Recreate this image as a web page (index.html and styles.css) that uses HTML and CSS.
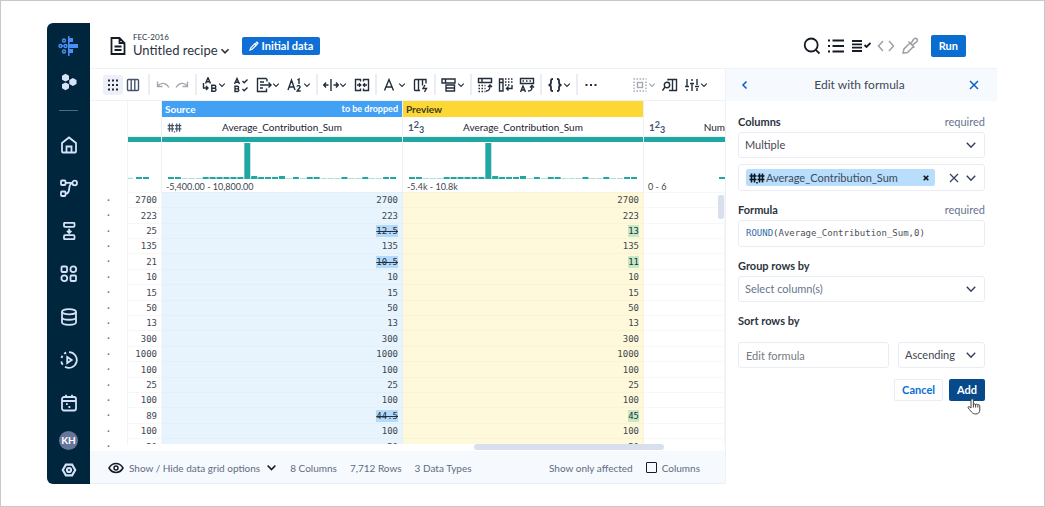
FILE: index.html
```html
<!DOCTYPE html>
<html lang="en">
<head>
<meta charset="utf-8">
<title>Untitled recipe</title>
<link rel="stylesheet" href="styles.css">
</head>
<body>
<svg class="defs" aria-hidden="true">
  <symbol id="chev" viewBox="0 0 10 10"><path d="M1.5 3.2 5 6.8 8.500 3.200"/></symbol>
  <symbol id="hash" viewBox="0 0 16 12"><path d="M2.500 1.500v9M5.500 1.500v9M.5 4h7M.5 7.500h7M10.500 1.500v9M13.500 1.500v9M8.500 4h7M8.500 7.500h7M8 10v1.500"/></symbol>
  <symbol id="bins" viewBox="0 0 230 36" preserveAspectRatio="none">
    <path d="M0 35.500h230" stroke="#a9dfda" stroke-width="1" stroke-dasharray="6 1"/>
    <path d="M0 35h6m1 0h6M35 35h6m1 0h6m1 0h6m1 0h6m1 0h6m1 0h6M84 35h6m1 0h6m1 0h6m1 0h6M126 35h6M140 35h6m1 0h6M175 35h6M196 35h6M217 35h6m1 0h6" stroke="#1fa8a2" stroke-width="2"/>
    <path d="M77 0h6v36h-6zM84 33h6v3h-6zM112 33h6v3h-6z" fill="#1fa8a2" stroke="none"/>
  </symbol>
</svg>
<div class="app">
  <nav class="sidebar" aria-label="Main">
    <a class="logo" href="#" aria-label="Home page"><svg width="22" height="24" viewBox="0 0 22 24"><g fill="#4a8ff5"><path d="M10 2h1.500v20H10zM11 4h4v4h-4zM11 10h9v4h-9zM11 15h4v4h-4z"/></g><g fill="none" stroke="#4a8ff5"><circle cx="6" cy="6.500" r="1.500"/><circle cx="2.500" cy="12" r="1.500"/><circle cx="6" cy="17.500" r="1.500"/><path d="M4 12h1.500"/><circle cx="7.500" cy="12" r="1.500"/></g></svg></a>
    <a class="apps" href="#" aria-label="Apps"><svg width="18" height="18" viewBox="0 0 16 18"><path fill="#d5e2f7" d="M4.500.800 8 2.700v4L4.500 8.600 1 6.700v-4zM11.800 5l3.700 2v4l-3.700 2L8.300 11V7zM4.500 9.400 8 11.300v4l-3.500 1.900L1 15.300v-4z"/></svg></a>
    <div class="rule"></div>
    <a class="nav" href="#" aria-label="Home"><svg viewBox="0 0 18 18"><path d="M2 7 9 1.500 16 7v8.500a1 1 0 0 1-1 1H3a1 1 0 0 1-1-1z"/><path d="M6.500 16v-5.500h5V16"/></svg></a>
    <a class="nav" href="#" aria-label="Flows"><svg viewBox="0 0 18 18"><rect x="1" y="1.500" width="4.500" height="4.500" rx="1"/><rect x="1" y="12.500" width="4.500" height="4.500" rx="1"/><circle cx="14.700" cy="4" r="2.300"/><path d="M5.500 3.800h6.900M12.500 4C9 5 9.500 8 9 11s-2 3.700-3.500 3.700"/></svg></a>
    <a class="nav" href="#" aria-label="Plans"><svg viewBox="0 0 18 18"><rect x="4" y=".8" width="10.500" height="4" rx="1"/><rect x="4" y="13.200" width="10.500" height="4" rx="1"/><path d="M9.200 6.800v4M7 8.800l2.200 2.200 2.200-2.200"/></svg></a>
    <a class="nav" href="#" aria-label="Library"><svg viewBox="0 0 18 18"><rect x="1.500" y="1.500" width="5.500" height="5.500" rx="1"/><circle cx="13.300" cy="4.300" r="2.900"/><circle cx="4.300" cy="13.300" r="2.900"/><rect x="10.500" y="10.500" width="5.500" height="5.500" rx="1"/></svg></a>
    <a class="nav" href="#" aria-label="Data"><svg viewBox="0 0 18 18"><ellipse cx="9" cy="3.800" rx="7" ry="2.600"/><path d="M2 4v10.300c0 3.400 14 3.400 14 0V4M2 9.200c0 3.400 14 3.400 14 0"/></svg></a>
    <a class="nav" href="#" aria-label="Jobs"><svg viewBox="0 0 18 18"><path d="M9 1.200a7.800 7.800 0 1 1-4 14.500M1.300 10.500a8 8 0 0 0 1.500 3.300M1.500 7a8 8 0 0 1 1-2.300M4.200 2.900a8 8 0 0 1 2-1.200"/><path d="M7.200 6v6l4.500-3z"/></svg></a>
    <a class="nav" href="#" aria-label="Schedules"><svg viewBox="0 0 18 18"><rect x="2" y="3" width="14" height="13.500" rx="2"/><path d="M2 7h14M6 .8V4M12 .8V4M6 10.200h1.800M8.500 13h1.800"/></svg></a>
    <a class="user" href="#"><span class="avatar">KH</span></a>
    <a class="settings" href="#" aria-label="Settings"><svg viewBox="0 0 18 18"><path d="M5.500 3h7l3.500 6-3.500 6h-7L2 9z"/><circle cx="9" cy="9" r="2.300"/></svg></a>
  </nav>
  <div class="workspace">
    <header class="topbar">
      <svg class="doc" width="16" height="18" viewBox="0 0 16 18"><path d="M1.500 1h8L14.500 6v11h-13zM9.500 1v5h5M4.500 9.500h7M4.500 13h7"/></svg>
      <div class="names">
        <div class="project">FEC-2016</div>
        <button class="recipe">Untitled recipe <svg width="10" height="10"><use href="#chev"/></svg></button>
      </div>
      <button class="initial"><svg width="10" height="10" viewBox="0 0 10 10"><path d="M1 9 2 6.500 5.500 3 7 4.500 3.500 8zM5 2.500 7.500 5M6.500 3 7.500 1.300a1 1 0 0 1 1.300 1.300L7 4"/></svg>Initial data</button>
      <div class="actions">
        <button aria-label="Search"><svg width="18" height="18" viewBox="0 0 18 18"><circle cx="8.200" cy="8" r="6.500"/><path d="m12.800 12.800 3.700 3.700"/></svg></button>
        <button aria-label="Steps"><svg width="18" height="18" viewBox="0 0 18 18"><path d="M5.500 3.500H17M5.500 9H17M5.500 14.500H17M1 3.500h2M1 9h2M1 14.500h2"/></svg></button>
        <button aria-label="Check steps"><svg width="20" height="18" viewBox="0 0 20 18"><path d="M1 4h10M1 7.300h10M1 10.600h10M1 14h10M13.500 8l2 2 4-4"/></svg></button>
        <button class="dim" aria-label="Code"><svg width="18" height="18" viewBox="0 0 18 18"><path d="M6 4 1.500 9 6 14M12 4l4.500 5-4.500 5"/></svg></button>
        <button class="dim" aria-label="Sample"><svg width="18" height="18" viewBox="0 0 18 18"><path d="m2 16 1-4 6-6 3.500 3.500-6 6-3.500.5zM7.500 4.500l6 6M10 6.500l2.500-4c1-1.500 2.500-1.500 3.300-.6.900.9.900 2.200-.6 3.300l-3.700 3"/></svg></button>
        <button class="run">Run</button>
      </div>
    </header>
    <div class="main">
      <section class="data">
        <div class="toolbar" role="toolbar">
          <div class="group tiles">
            <button class="tile on" aria-label="Grid"><svg width="14" height="14" viewBox="0 0 14 14"><path d="M2 2.500h10M2 7h10M2 11.500h10" stroke-width="2" stroke-dasharray="2 2"/></svg></button>
            <button class="tile" aria-label="Columns"><svg width="14" height="14" viewBox="0 0 14 14" class="slate"><rect x="1.500" y="1.500" width="11" height="11" rx="1"/><path d="M5.200 1.500v11M8.800 1.500v11"/></svg></button>
          </div>
          <i class="sep"></i>
          <div class="group history">
            <button aria-label="Undo"><svg class="faint" width="16" height="16" viewBox="0 0 16 16"><path d="M2.500 4.500v5h5M2.800 9C6 5 11 5.500 14 10.500"/></svg></button>
            <button aria-label="Redo"><svg class="faint" width="16" height="16" viewBox="0 0 16 16"><path d="M13.500 4.500v5h-5M13.200 9C10 5 5 5.500 2 10.500"/></svg></button>
          </div>
          <i class="sep"></i>
          <div class="group">
            <button aria-label="Replace"><svg width="16" height="16" viewBox="0 0 16 16"><path d="M3.500 6.500 6 .8l2.500 5.700M4.500 4.800h3M1.500 6v5h4M4 9l2 2-2 2M9.800 8.200v6h2.700a1.500 1.500 0 0 0 0-3H9.800h2.500a1.500 1.500 0 0 0 0-3z"/></svg><svg width="8" height="8"><use href="#chev"/></svg></button>
            <button aria-label="Standardize"><svg width="16" height="16" viewBox="0 0 16 16"><path d="M1.500 7 4 1.500 6.500 7M2.500 5.300h3M2 9.300v5.200h2.500a1.300 1.300 0 0 0 0-2.600H2h2.300a1.300 1.300 0 0 0 0-2.600zM9.500 4l1.700 1.700L14.500 2.500M9.500 12l1.700 1.700 3.300-3.200"/></svg></button>
            <button aria-label="Extract"><svg width="16" height="16" viewBox="0 0 16 16"><path d="M11 4.500v-2l-1-1H1.500v13h9v-3M4 5h4M4 11h3M4 8h11M12.500 5.500 15 8l-2.500 2.500"/></svg><svg width="8" height="8"><use href="#chev"/></svg></button>
            <button aria-label="Number format"><svg width="16" height="16" viewBox="0 0 16 16"><path d="M1 13 4.500 3 8 13M2 10h5M10.500 3l1.500-1v5M10 9.500c.5-1.500 3.500-1 3 .7L10.200 14h3.500"/></svg><svg width="8" height="8"><use href="#chev"/></svg></button>
          </div>
          <i class="sep"></i>
          <div class="group">
            <button aria-label="Split"><svg width="16" height="16" viewBox="0 0 16 16"><path d="M8 2v12M5.500 8h-5M3 5.500.8 8 3 10.500M10.500 8h5M13 5.500 15.200 8 13 10.500"/></svg><svg width="8" height="8"><use href="#chev"/></svg></button>
            <button aria-label="Merge"><svg width="16" height="16" viewBox="0 0 16 16"><path d="M6.500 4.500v-2h-5v11h5v-2M9.500 4.500v-2h5v11h-5v-2M3 8h3.500M5 6.300 6.700 8 5 9.700M13 8H9.500M11 6.300 9.300 8l1.700 1.700"/></svg></button>
          </div>
          <i class="sep"></i>
          <div class="group">
            <button aria-label="Text format"><svg width="16" height="16" viewBox="0 0 16 16"><path d="M2.500 13.500 7 2.500l4.500 11M4 10h6"/></svg><svg width="8" height="8"><use href="#chev"/></svg></button>
            <button aria-label="Column functions"><svg width="16" height="16" viewBox="0 0 16 16"><path d="M7 13.500H2.500a1 1 0 0 1-1-1v-9a1 1 0 0 1 1-1H13v4M5.500 2.500v11M9.500 2.500v6M12 8l-2 3.500h3.500L11.500 15"/></svg></button>
          </div>
          <i class="sep"></i>
          <div class="group">
            <button aria-label="Rows"><svg width="16" height="16" viewBox="0 0 16 16"><path d="M1 2h13v4H1zM4.500 2v4M5 8h8.500v6H5zM5 11h8.500"/></svg><svg width="8" height="8"><use href="#chev"/></svg></button>
          </div>
          <i class="sep"></i>
          <div class="group pivots">
            <button aria-label="Pivot"><svg width="16" height="16" viewBox="0 0 16 16"><path d="M1.500 1.500h13v4h-13zM5 1.500v4M9 14c3.500 0 4-2 4-5.500M11 10l2-2 2 2"/><path d="M1.500 8.500h7M1.500 11.500h7M1.500 14.500h7" stroke-dasharray="1.500 1.500"/></svg></button>
            <button aria-label="Unpivot"><svg width="16" height="16" viewBox="0 0 16 16"><path d="M1.500 2v12h3.500V2zM1.500 5.500H5M14 8v3.500H8.500M10.500 9.500l-2 2 2 2"/><path d="M7 2h8M7 5h8M7 8h5" stroke-dasharray="1.500 1.500"/></svg></button>
            <button aria-label="Header"><svg width="16" height="16" viewBox="0 0 16 16"><path d="M1.500 1.500h13v5h-13zM1.500 15 4 9l2.500 6M2.500 13h3M9 14c3.500 0 4-1.500 4-5M11 10.500l2-2 2 2"/><path d="M3.500 4h9" stroke-dasharray="1.500 2"/></svg></button>
          </div>
          <i class="sep"></i>
          <div class="group">
            <button aria-label="Nested data"><svg width="16" height="16" viewBox="0 0 16 16"><path d="M6 2C3.500 2 4 3.500 4 5.500S3 8 1.500 8C3 8 4 8.500 4 10.500S3.500 14 6 14M10 2c2.500 0 2 1.500 2 3.500S13 8 14.500 8C13 8 12 8.500 12 10.500S12.500 14 10 14" stroke-width="1.800"/></svg><svg width="8" height="8"><use href="#chev"/></svg></button>
          </div>
          <i class="sep"></i>
          <button aria-label="More"><svg width="16" height="16" viewBox="0 0 16 16"><path d="M2.500 8h12" stroke-width="2" stroke-dasharray="2 2.500"/></svg></button>
          <div class="group view">
            <button aria-label="Selection"><svg class="faint" width="16" height="16" viewBox="0 0 16 16"><path d="M1.500 2h13M1.500 14h13M2 4.500v8M14 4.500v8" stroke-dasharray="1.500 1.500"/><rect x="5.500" y="5.500" width="5" height="5"/></svg><svg class="faint" width="8" height="8"><use href="#chev"/></svg></button>
            <button aria-label="Find column"><svg width="16" height="16" viewBox="0 0 16 16"><circle cx="5" cy="8" r="2.700"/><path d="m3 10-2.500 3.500M6 3.500v-1h8.500v11H7M10.500 2.500v11"/></svg></button>
            <button aria-label="Filters"><svg width="16" height="16" viewBox="0 0 16 16"><path d="M3 2v7M3 12v2M8 2v2M8 7v7M13 2v6M13 11v3M1 9.500h4M6 6.500h4M11 9.500h4"/></svg><svg width="8" height="8"><use href="#chev"/></svg></button>
          </div>
        </div>
        <div class="grid">
          <ul class="gutter" aria-hidden="true"><li>·</li><li>·</li><li>·</li><li>·</li><li>·</li><li>·</li><li>·</li><li>·</li><li>·</li><li>·</li><li>·</li><li>·</li><li>·</li><li>·</li><li>·</li><li>·</li><li>·</li></ul>
          <div class="clip">
          <table>
            <colgroup><col class="c-first"><col class="c-mid"><col class="c-mid"><col></colgroup>
            <thead><tr>
              <th><div class="band"></div><div class="title"></div><div class="quality"></div><div class="hist"><svg width="33" height="36"><path d="M0 35.500h5" stroke="#a9dfda"/><path d="M8 35h6m1 0h6" stroke="#1fa8a2" stroke-width="2"/></svg></div><div class="range"></div></th>
              <th><div class="band source"><span>Source</span><span class="note">to be dropped</span></div><div class="title"><svg class="type" width="15" height="11"><use href="#hash"/></svg><span>Average_Contribution_Sum</span></div><div class="quality"></div><div class="hist"><svg class="bins"><use href="#bins"/></svg></div><div class="range">-5,400.00 - 10,800.00</div></th>
              <th><div class="band preview"><span>Preview</span></div><div class="title"><b class="int">1<sup>2</sup><sub>3</sub></b><span>Average_Contribution_Sum</span></div><div class="quality"></div><div class="hist"><svg class="bins"><use href="#bins"/></svg></div><div class="range">-5.4k - 10.8k</div></th>
              <th><div class="band"></div><div class="title end"><b class="int">1<sup>2</sup><sub>3</sub></b><span>Num</span></div><div class="quality"></div><div class="hist right"><svg width="6" height="36"><path d="M0 35h6" stroke="#1fa8a2" stroke-width="2"/></svg></div><div class="range">0 - 6</div></th>
            </tr></thead>
            <tbody>
              <tr><td>2700</td><td>2700</td><td>2700</td><td></td></tr>
              <tr><td>223</td><td>223</td><td>223</td><td></td></tr>
              <tr><td>25</td><td><del>12.5</del></td><td><ins>13</ins></td><td></td></tr>
              <tr><td>135</td><td>135</td><td>135</td><td></td></tr>
              <tr><td>21</td><td><del>10.5</del></td><td><ins>11</ins></td><td></td></tr>
              <tr><td>10</td><td>10</td><td>10</td><td></td></tr>
              <tr><td>15</td><td>15</td><td>15</td><td></td></tr>
              <tr><td>50</td><td>50</td><td>50</td><td></td></tr>
              <tr><td>13</td><td>13</td><td>13</td><td></td></tr>
              <tr><td>300</td><td>300</td><td>300</td><td></td></tr>
              <tr><td>1000</td><td>1000</td><td>1000</td><td></td></tr>
              <tr><td>100</td><td>100</td><td>100</td><td></td></tr>
              <tr><td>25</td><td>25</td><td>25</td><td></td></tr>
              <tr><td>100</td><td>100</td><td>100</td><td></td></tr>
              <tr><td>89</td><td><del>44.5</del></td><td><ins>45</ins></td><td></td></tr>
              <tr><td>100</td><td>100</td><td>100</td><td></td></tr>
              <tr><td>50</td><td>50</td><td>50</td><td></td></tr>
            </tbody>
          </table>
          </div>
          <div class="thumb-v"></div>
          <div class="thumb-h"></div>
        </div>
        <footer class="status">
          <button class="options"><svg width="16" height="12" viewBox="0 0 16 12"><path d="M1 6c3.500-6 10.500-6 14 0-3.500 6-10.500 6-14 0z"/><circle cx="8" cy="6" r="2"/></svg>Show / Hide data grid options<svg class="down" width="11" height="11"><use href="#chev"/></svg></button>
          <span>8 Columns</span><span>7,712 Rows</span><span>3 Data Types</span>
          <span class="affected">Show only affected</span>
          <label><input type="checkbox">Columns</label>
        </footer>
      </section>
      <aside class="panel">
        <div class="panel-head">
          <button aria-label="Back"><svg width="10" height="10" viewBox="0 0 10 10"><path d="M6.500 1.500 3 5l3.500 3.500"/></svg></button>
          <h2>Edit with formula</h2>
          <button aria-label="Close"><svg width="10" height="10" viewBox="0 0 10 10"><path d="m1 1 8 8M9 1 1 9"/></svg></button>
        </div>
        <form class="form">
          <div class="label first"><label for="cols">Columns</label><span>required</span></div>
          <div class="select"><select id="cols"><option>Multiple</option></select><svg width="12" height="12"><use href="#chev"/></svg></div>
          <div class="multi">
            <span class="chip"><svg width="16" height="12"><use href="#hash"/></svg>Average_Contribution_Sum<button type="button" aria-label="Remove"><svg width="6" height="6" viewBox="0 0 6 6"><path d="m.7.700 4.600 4.600M5.300.700.700 5.300"/></svg></button></span>
            <button type="button" aria-label="Clear all"><svg width="10" height="10" viewBox="0 0 10 10"><path d="m1 1 8 8M9 1 1 9"/></svg></button>
            <button type="button" aria-label="Open list"><svg width="12" height="12"><use href="#chev"/></svg></button>
          </div>
          <div class="label"><span class="name" id="formula-label">Formula</span><span>required</span></div>
          <div class="formula" role="textbox" contenteditable="true" spellcheck="false" aria-labelledby="formula-label"><span>ROUND</span>(Average_Contribution_Sum,0)</div>
          <div class="label"><label for="group">Group rows by</label></div>
          <div class="select empty"><select id="group"><option>Select column(s)</option></select><svg width="12" height="12"><use href="#chev"/></svg></div>
          <div class="label sort-label"><label for="sort">Sort rows by</label></div>
          <div class="sort">
            <input id="sort" type="text" placeholder="Edit formula">
            <div class="select order"><select aria-label="Sort order"><option>Ascending</option></select><svg width="12" height="12"><use href="#chev"/></svg></div>
          </div>
          <div class="buttons">
            <button type="button" class="cancel">Cancel</button>
            <button type="button" class="add">Add</button>
            <svg class="cursor" width="14" height="17" viewBox="0 0 14 17"><path d="M4 10V2a1.200 1.200 0 0 1 2.400 0v5c0-1.500 2.200-1.500 2.200 0 0-1.200 2.200-1.200 2.200.300 0-1 2-.9 2 .6V12c0 2.500-1.500 4-4 4-3 0-4-1.500-7.500-6C.5 8.500 2 7.800 4 10zM6.400 7v2.500M8.600 7v2.500M10.800 7.500v2"/></svg>
          </div>
        </form>
      </aside>
    </div>
  </div>
</div>
</body>
</html>
```

FILE: styles.css
```css
* { box-sizing: border-box; }
body {
  margin: 0;
  height: 100vh;
  display: flex;
  padding: 22px 47px 22px 46px;
  border: 1px solid #c8c8c8;
  background: #fff;
  font: 11px/14px Lato, "Open Sans", sans-serif;
  color: #2b3440;
}
.defs { position: absolute; width: 0; height: 0; }
svg { display: block; flex: none; fill: none; stroke: currentColor; stroke-width: 1.4; }
button, input, select { font: inherit; color: inherit; }
button { display: flex; align-items: center; justify-content: center; padding: 0; border: 0; background: none; }
ul, h2 { margin: 0; padding: 0; list-style: none; }

.app { flex: 1; display: flex; min-width: 0; border-radius: 6px; overflow: hidden; }

.sidebar { width: 43px; flex: none; display: flex; flex-direction: column; background: #00263e; color: #d5e2f7; }
.sidebar a { display: flex; align-items: center; justify-content: center; color: inherit; text-decoration: none; }
.logo { height: 45px; }
.logo svg, .apps svg { stroke: none; }
.apps { height: 28px; }
.rule { width: 19px; margin: 14px auto 12px; border-top: 1px solid #4f6a80; }
.nav { height: 43px; }
.nav svg { width: 18px; height: 18px; stroke-width: 1.8; }
.user { height: 32px; }
.avatar { width: 19px; height: 19px; border-radius: 50%; background: #66759a; color: #fff; font-weight: 700; font-size: 10px; line-height: 19px; text-align: center; }
.settings { height: 28px; }
.settings svg { width: 16px; height: 16px; stroke-width: 2.4; }

.workspace { flex: 1; min-width: 0; display: flex; flex-direction: column; }
.topbar { height: 46px; display: flex; align-items: center; padding: 0 31px 0 20px; border-bottom: 1px solid #eef1f6; }
.doc { stroke-width: 1.8; color: #151c26; }
.names { margin: 0 12px 0 7px; }
.project { font-size: 8px; line-height: 10px; }
.recipe { gap: 2px; font-size: 13px; line-height: 17px; }
.recipe svg { stroke-width: 1.6; }
.initial { gap: 3px; height: 18px; padding: 0 7px; border-radius: 2px; background: #0f6fd6; color: #fff; font-weight: 700; }
.initial svg { stroke-width: 1.2; }
.actions { margin-left: auto; display: flex; align-items: center; gap: 6px; color: #151c26; }
.actions svg { stroke-width: 1.8; }
.actions .dim { color: #9aa0a6; }
.actions .dim svg { stroke-width: 1.5; }
.run { height: 22px; padding: 0 8px; margin-left: 6px; border-radius: 2px; background: #0a6ed1; color: #fff; font-weight: 700; }

.main { flex: 1; min-height: 0; display: flex; }
.data { flex: 1; min-width: 0; display: flex; flex-direction: column; }
.toolbar { height: 32px; flex: none; display: flex; align-items: center; gap: 5px; padding: 0 17px 0 13px; border-bottom: 1px solid #eef1f6; color: #222d3b; }
.group { display: flex; gap: 7px; }
.tiles { gap: 0; }
.history { gap: 3px; }
.pivots { gap: 5px; }
.view { gap: 6px; margin-left: auto; }
.tile { width: 20px; height: 20px; border-radius: 3px; }
.on { background: #edf0f8; }
.slate { color: #44546f; }
.faint { color: #a3a9b1; }
.sep { width: 2px; height: 21px; background: #eaeef4; }

.grid { flex: 1 1 0; min-height: 0; display: flex; position: relative; overflow: hidden; }
.gutter { width: 37px; flex: none; padding-top: 91px; text-align: center; color: #6b7280; }
.gutter li { height: 15px; line-height: 15px; }
.gutter li:nth-child(5n+2), .gutter li:nth-child(5n) { height: 16px; }
.clip { flex: 1; min-width: 0; margin-bottom: 7px; overflow: hidden; border-left: 1px solid #f1f3f6; }
table { width: 100%; table-layout: fixed; border-collapse: separate; border-spacing: 0; }
.c-first { width: 34px; }
.c-mid { width: 241px; }
th, td { padding: 0; }
th { font-weight: 400; text-align: left; border-right: 1px solid #eef1f4; }
th:last-child { border-right: 0; }
.band { height: 16px; display: flex; justify-content: space-between; padding: 0 4px 0 3px; font-size: 10px; line-height: 16px; font-weight: 700; }
.note { font-size: 9px; }
.source { background: #42a1f5; color: #fff; }
.preview { background: #fdd835; color: #3d3a20; }
.title { position: relative; height: 20px; display: flex; align-items: center; justify-content: center; border-bottom: 1px solid #eef1f4; font-size: 10px; color: #1c242f; overflow: hidden; }
.title.end { justify-content: flex-end; }
.type { position: absolute; left: 5px; top: 5px; color: #44546f; }
.int { position: absolute; left: 5px; top: 3px; color: #44546f; }
.int sup, .int sub { font-size: 9px; line-height: 0; }
.int sup { vertical-align: 3px; }
.int sub { vertical-align: -2px; }
.quality { height: 5px; background: #1fa8a2; }
.hist { height: 38px; padding: 1px 6px; }
th:first-child .hist { padding: 1px 0; }
.hist.right { padding-right: 0; display: flex; justify-content: flex-end; }
.bins { width: 100%; height: 36px; }
.range { height: 12px; padding-left: 4px; font-size: 9px; line-height: 14px; color: #3e4650; white-space: nowrap; }
td { height: 15px; padding-right: 4px; border-top: 1px solid #f5f7f8; border-right: 1px solid #f3f5f7; text-align: right; font: 9px/12px "DejaVu Sans Mono", monospace; color: #3f464f; }
tr:nth-child(5n+2) td, tr:nth-child(5n) td { height: 16px; }
td:nth-child(2) { background: #e7f4fe; border-color: #e2f0fa; }
td:nth-child(3) { background: #fff9db; border-color: #faf4d4; }
del, ins { display: inline-block; line-height: 12px; color: #24303c; }
del { background: #b3dafa; text-decoration: line-through; }
ins { background: #c5e8c5; text-decoration: none; }
.thumb-v { position: absolute; right: 1px; top: 94px; width: 6px; height: 24px; border-radius: 2px; background: #d8e0ee; }
.thumb-h { position: absolute; right: 61px; bottom: 1px; width: 30%; height: 6px; border-radius: 3px; background: #d8e0ee; }

.status { height: 33px; flex: none; display: flex; align-items: center; gap: 13px; padding: 1px 25px 0 18px; background: #f6faff; border-bottom: 1px solid #eaf0f7; font-size: 10px; color: #5f6c80; }
.options { gap: 5px; }
.options svg { color: #151c26; stroke-width: 1.5; }
.options .down { margin-left: 1px; }
.affected { margin-left: auto; }
.status label { display: flex; align-items: center; gap: 5px; }
.status input { appearance: none; width: 11px; height: 11px; margin: 0; border: 1px solid #151c26; border-radius: 1px; outline: 0; }

.panel { width: 272px; flex: none; border-left: 1px solid #eef1f6; }
.panel-head { height: 32px; display: flex; align-items: center; justify-content: space-between; padding: 0 18px 0 14px; background: #f6faff; color: #0a5fc4; }
.panel-head h2 { font-weight: 400; font-size: 12px; line-height: 16px; color: #3f4854; }
.panel-head svg { stroke-width: 1.5; }
.form { padding: 14px 12px 0 12px; }
.label { display: flex; justify-content: space-between; margin: 12px 0 3px; color: #66748e; }
.first { margin-top: 0; }
.label label, .label .name { font-weight: 700; color: #2b3440; }
.select { position: relative; color: #3f4854; }
.select select { appearance: none; display: block; width: 100%; height: 26px; padding: 0 6px; border: 1px solid #e9ecf5; border-radius: 3px; background: #fff; }
.select svg { position: absolute; right: 8px; top: 7px; pointer-events: none; color: #33415c; stroke-width: 1.2; }
.select.empty select { color: #66748e; }
.multi { display: flex; align-items: center; height: 27px; margin-top: 6px; padding: 0 7px; gap: 6px; border: 1px solid #e9ecf5; border-radius: 3px; color: #33415c; }
.multi svg { stroke-width: 1.2; }
.chip { flex: 1; display: flex; align-items: center; height: 17px; margin-right: 8px; padding: 0 5px 0 3px; border-radius: 2px; background: #b8defb; color: #3a4a5e; }
.chip svg { margin-right: 1px; color: #0c1622; stroke-width: 1.6; }
.chip button { margin-left: auto; }
.formula { height: 27px; padding: 0 7px; border: 1px solid #e9ecf5; border-radius: 3px; font: 9px/25px "DejaVu Sans Mono", monospace; color: #4a5057; white-space: nowrap; overflow: hidden; }
.formula span { color: #2f6da8; }
.sort-label { margin-bottom: 14px; }
.sort { display: flex; gap: 9px; }
.sort input { flex: 1; min-width: 0; height: 26px; padding: 0 7px; border: 1px solid #e9ecf5; border-radius: 3px; background: #fff; }
.sort input::placeholder { color: #757b84; opacity: 1; }
.order { width: 87px; }
.buttons { position: relative; display: flex; justify-content: flex-end; gap: 6px; margin-top: 11px; }
.buttons button { height: 22px; border-radius: 2px; font-weight: 700; }
.cancel { padding: 0 7px; border: 1px solid #e9ecf5; color: #0a6ed1; }
.add { padding: 0 8px; background: #064a8c; color: #fff; }
.cursor { position: absolute; right: 4px; top: 19px; fill: #fff; color: #444; stroke-width: 1; }
```
